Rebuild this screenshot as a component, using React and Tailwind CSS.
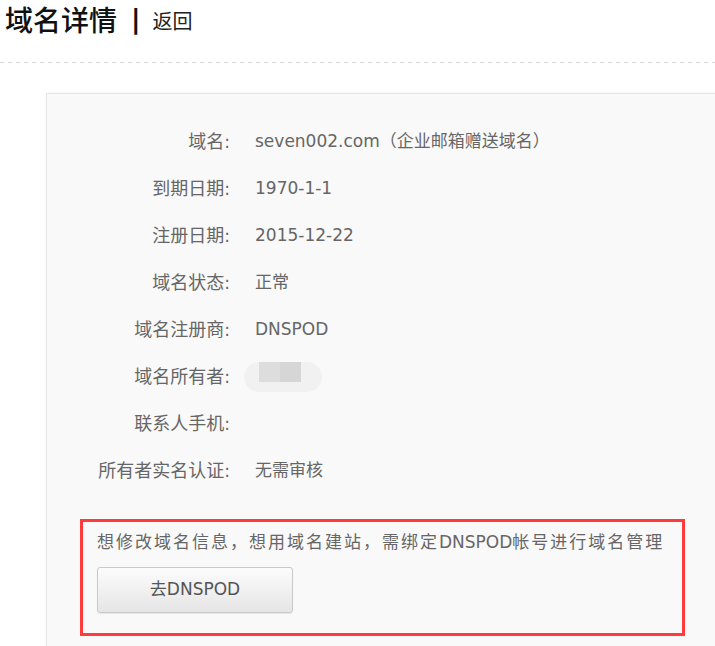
export default function App() {
  const rows = [
    ["域名:", "seven002.com", "（企业邮箱赠送域名）"],
    ["到期日期:", "1970-1-1"],
    ["注册日期:", "2015-12-22"],
    ["域名状态:", "正常"],
    ["域名注册商:", "DNSPOD"],
    ["域名所有者:", "__blur__"],
    ["联系人手机:", ""],
    ["所有者实名认证:", "无需审核"],
  ];
  return (
    <div
      className="w-[715px] h-[646px] overflow-hidden bg-white"
      style={{ fontFamily: '"DejaVu Sans", "Noto Sans CJK SC", sans-serif' }}
    >
      <div className="flex items-center h-[38px] pl-[5px]">
        <span className="text-[28px] leading-[34px] text-[#111] font-medium" style={{ fontFamily: '"Noto Sans CJK SC", sans-serif' }}>域名详情</span>
        <span className="ml-[14px] text-[26px] leading-[32px] font-bold text-[#111]">|</span>
        <span className="ml-[12px] mt-[3px] text-[20px] leading-[30px] text-[#222]" style={{ fontFamily: '"Noto Sans CJK SC", sans-serif' }}>返回</span>
      </div>
      <div className="mt-[24px] h-[1px] w-full bg-[linear-gradient(to_right,#d8d8d8_55%,transparent_55%)] bg-[length:8px_1px]" />
      <div className="ml-[46px] mt-[30px] w-[720px] h-[600px] bg-[#f9f9f9] border border-[#e6e6e6] shadow-[0_0_3px_rgba(0,0,0,0.06)] pt-[24px]">
        {rows.map(([label, value, extra]) => (
          <div key={label} className="flex items-center h-[47px] text-[17px] text-[#666]">
            <div className="w-[183px] text-right">
              <span className="text-[18px]" style={{ fontFamily: '"Noto Sans CJK SC", sans-serif' }}>{label.slice(0, -1)}</span>
              <span>:</span>
            </div>
            <div className="ml-[25px] flex items-center">
              {value === "__blur__" ? (
                <div className="-ml-[11px] w-[78px] h-[30px] rounded-full bg-[#f1f1f1] flex items-start">
                  <div className="ml-[15px] flex">
                    <div className="w-[21px] h-[20px] bg-[#dddddd]" />
                    <div className="w-[21px] h-[20px] bg-[#d6d6d6]" />
                  </div>
                </div>
              ) : (
                <>
                  <span>{value}</span>
                  {extra && <span className="text-[#666]">{extra}</span>}
                </>
              )}
            </div>
          </div>
        ))}
        <div className="ml-[33px] mt-[25px] w-[605px] h-[117px] border-[3px] border-[#ff3b3b] pl-[14px] pt-[7px]">
          <div className="text-[17px] leading-[26px] text-[#666] whitespace-nowrap">
            <span className="tracking-[2px]">想修改域名信息，想用域名建站，需绑定</span>
            <span>DNSPOD</span>
            <span className="tracking-[2px]">帐号进行域名管理</span>
          </div>
          <button className="mt-[12px] w-[196px] h-[46px] rounded-[3px] border border-[#c9c9c9] bg-[linear-gradient(to_bottom,#fcfcfc,#e5e5e5)] text-[17px] text-[#555] shadow-[0_1px_1px_rgba(0,0,0,0.08)]">
            去DNSPOD
          </button>
        </div>
      </div>
    </div>
  );
}
